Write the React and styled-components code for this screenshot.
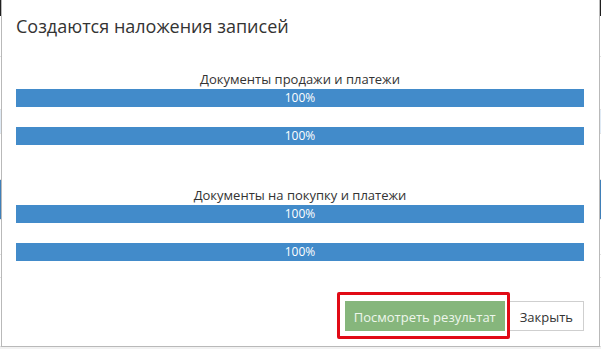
import React from "react";
import styled, { createGlobalStyle } from "styled-components";

const Global = createGlobalStyle`
  html, body { margin: 0; padding: 0; }
  body { font-family: "Open Sans", "Noto Sans", sans-serif; color: #333; }
  * { box-sizing: border-box; }
`;

const Page = styled.div`
  position: relative;
  width: 601px;
  height: 349px;
  overflow: hidden;
  background: #f2f2f2;
  display: flex;
  flex-direction: column;
`;

const TopBar = styled.div`
  height: 16px;
  background: #1f1f1f;
  flex: none;
`;

const BgTable = styled.div`
  flex: 1;
  background: #fff;
  display: flex;
  flex-direction: column;
  border-bottom: 1px solid #ddd;
  margin-bottom: 2px;
`;

const BgRow = styled.div`
  height: ${(p) => p.$h}px;
  flex: none;
  border-bottom: 1px solid #e2e2e2;
  background: ${(p) => p.$bg || "transparent"};
`;

const Modal = styled.div`
  position: absolute;
  top: 0;
  left: 1px;
  width: 599px;
  height: 347px;
  background: #fff;
  border: 1px solid #b9b9b9;
  border-top: none;
  display: flex;
  flex-direction: column;
`;

const Header = styled.div`
  padding: 14px 15px 0 14px;
`;

const Title = styled.h4`
  margin: 0;
  font-size: 18px;
  line-height: 25px;
  font-weight: 400;
  color: #333;
`;

const Body = styled.div`
  padding: 31px 15px 0 14px;
  display: flex;
  flex-direction: column;
`;

const Group = styled.div`
  display: flex;
  flex-direction: column;
  margin-top: ${(p) => p.$mt || 0}px;
`;

const Label = styled.div`
  text-align: center;
  font-size: 13px;
  line-height: 18px;
  margin-bottom: 1px;
  color: #333;
`;

const Progress = styled.div`
  height: 18px;
  background: #f5f5f5;
  margin-top: ${(p) => p.$mt || 0}px;
`;

const Bar = styled.div`
  height: 100%;
  background: #428bca;
  color: #fff;
  font-size: 12px;
  line-height: 18px;
  text-align: center;
`;

const Footer = styled.div`
  margin-top: auto;
  padding: 0 15px 15px 14px;
  display: flex;
  justify-content: flex-end;
  gap: 4px;
`;

const Highlighted = styled.div`
  position: relative;
  display: flex;
`;

const Frame = styled.div`
  position: absolute;
  top: -9px;
  left: -8px;
  right: -5px;
  bottom: -8px;
  border: 3px solid #e10a16;
  border-radius: 2px;
  pointer-events: none;
  z-index: 2;
`;

const Button = styled.button`
  font-family: "Open Sans", "Noto Sans", sans-serif;
  font-size: 13px;
  line-height: 18px;
  padding: 6px ${(p) => (p.$primary ? 8 : 10)}px;
  height: 30px;
  border-radius: 0;
  border: 1px solid ${(p) => (p.$primary ? "#86b67c" : "#cfcfcf")};
  background: ${(p) => (p.$primary ? "#86b67c" : "#fff")};
  color: ${(p) => (p.$primary ? "#eef6ec" : "#333")};
  cursor: pointer;
`;

const ProgressBar = ({ value, mt }) => (
  <Progress $mt={mt}>
    <Bar style={{ width: `${value}%` }}>{value}%</Bar>
  </Progress>
);

export default function App() {
  return (
    <>
      <Global />
      <Page>
        <TopBar />
        <BgTable>
          <BgRow $h={41} />
          <BgRow $h={53} />
          <BgRow $h={24} $bg="#dfeaf5" />
          <BgRow $h={46} />
          <BgRow $h={40} $bg="#3f7fb8" />
          <BgRow $h={35} />
          <BgRow $h={23} />
        </BgTable>
        <Modal>
          <Header>
            <Title>Создаются наложения записей</Title>
          </Header>
          <Body>
            <Group>
              <Label>Документы продажи и платежи</Label>
              <ProgressBar value={100} />
              <ProgressBar value={100} mt={20} />
            </Group>
            <Group $mt={41}>
              <Label>Документы на покупку и платежи</Label>
              <ProgressBar value={100} />
              <ProgressBar value={100} mt={20} />
            </Group>
          </Body>
          <Footer>
            <Highlighted>
              <Frame />
              <Button $primary>Посмотреть результат</Button>
            </Highlighted>
            <Button>Закрыть</Button>
          </Footer>
        </Modal>
      </Page>
    </>
  );
}
